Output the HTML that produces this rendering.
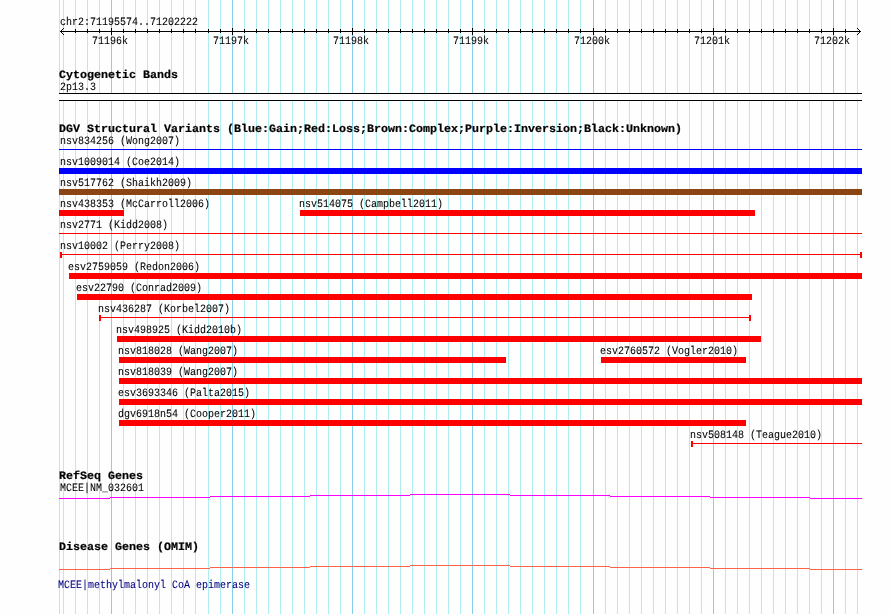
<!DOCTYPE html>
<html><head><meta charset="utf-8"><title>DGV Structural Variants - chr2:71195574..71202222</title>
<style>
html,body{margin:0;padding:0;background:#fdfefd;}
#wrap{position:relative;width:890px;height:614px;overflow:hidden;background:#fdfefd;}
svg{display:block;}
text{font-family:"Liberation Mono",monospace;white-space:pre;}
text.r{font-size:11.25px;stroke:#000;stroke-width:0.08px;}
text.b{font-size:11.25px;font-weight:bold;stroke:#000;stroke-width:0.2px;}
</style></head>
<body><div id="wrap">
<svg width="890" height="614" viewBox="0 0 890 614">
<g shape-rendering="crispEdges">
<rect x="59" y="0" width="1" height="93" fill="#afeeee"/>
<rect x="59" y="101" width="1" height="513" fill="#afeeee"/>
<rect x="63" y="0" width="1" height="93" fill="#afeeee"/>
<rect x="63" y="101" width="1" height="513" fill="#afeeee"/>
<rect x="75" y="0" width="1" height="93" fill="#afeeee"/>
<rect x="75" y="101" width="1" height="513" fill="#afeeee"/>
<rect x="87" y="0" width="1" height="93" fill="#afeeee"/>
<rect x="87" y="101" width="1" height="513" fill="#afeeee"/>
<rect x="99" y="0" width="1" height="93" fill="#afeeee"/>
<rect x="99" y="101" width="1" height="513" fill="#afeeee"/>
<rect x="111" y="0" width="1" height="93" fill="#87ceeb"/>
<rect x="111" y="101" width="1" height="513" fill="#87ceeb"/>
<rect x="123" y="0" width="1" height="93" fill="#afeeee"/>
<rect x="123" y="101" width="1" height="513" fill="#afeeee"/>
<rect x="135" y="0" width="1" height="93" fill="#afeeee"/>
<rect x="135" y="101" width="1" height="513" fill="#afeeee"/>
<rect x="147" y="0" width="1" height="93" fill="#afeeee"/>
<rect x="147" y="101" width="1" height="513" fill="#afeeee"/>
<rect x="159" y="0" width="1" height="93" fill="#afeeee"/>
<rect x="159" y="101" width="1" height="513" fill="#afeeee"/>
<rect x="171" y="0" width="1" height="93" fill="#afeeee"/>
<rect x="171" y="101" width="1" height="513" fill="#afeeee"/>
<rect x="183" y="0" width="1" height="93" fill="#afeeee"/>
<rect x="183" y="101" width="1" height="513" fill="#afeeee"/>
<rect x="195" y="0" width="1" height="93" fill="#afeeee"/>
<rect x="195" y="101" width="1" height="513" fill="#afeeee"/>
<rect x="208" y="0" width="1" height="93" fill="#afeeee"/>
<rect x="208" y="101" width="1" height="513" fill="#afeeee"/>
<rect x="220" y="0" width="1" height="93" fill="#afeeee"/>
<rect x="220" y="101" width="1" height="513" fill="#afeeee"/>
<rect x="232" y="0" width="1" height="93" fill="#87ceeb"/>
<rect x="232" y="101" width="1" height="513" fill="#87ceeb"/>
<rect x="244" y="0" width="1" height="93" fill="#afeeee"/>
<rect x="244" y="101" width="1" height="513" fill="#afeeee"/>
<rect x="256" y="0" width="1" height="93" fill="#afeeee"/>
<rect x="256" y="101" width="1" height="513" fill="#afeeee"/>
<rect x="268" y="0" width="1" height="93" fill="#afeeee"/>
<rect x="268" y="101" width="1" height="513" fill="#afeeee"/>
<rect x="280" y="0" width="1" height="93" fill="#afeeee"/>
<rect x="280" y="101" width="1" height="513" fill="#afeeee"/>
<rect x="292" y="0" width="1" height="93" fill="#afeeee"/>
<rect x="292" y="101" width="1" height="513" fill="#afeeee"/>
<rect x="304" y="0" width="1" height="93" fill="#afeeee"/>
<rect x="304" y="101" width="1" height="513" fill="#afeeee"/>
<rect x="316" y="0" width="1" height="93" fill="#afeeee"/>
<rect x="316" y="101" width="1" height="513" fill="#afeeee"/>
<rect x="328" y="0" width="1" height="93" fill="#afeeee"/>
<rect x="328" y="101" width="1" height="513" fill="#afeeee"/>
<rect x="340" y="0" width="1" height="93" fill="#afeeee"/>
<rect x="340" y="101" width="1" height="513" fill="#afeeee"/>
<rect x="352" y="0" width="1" height="93" fill="#87ceeb"/>
<rect x="352" y="101" width="1" height="513" fill="#87ceeb"/>
<rect x="364" y="0" width="1" height="93" fill="#afeeee"/>
<rect x="364" y="101" width="1" height="513" fill="#afeeee"/>
<rect x="376" y="0" width="1" height="93" fill="#afeeee"/>
<rect x="376" y="101" width="1" height="513" fill="#afeeee"/>
<rect x="388" y="0" width="1" height="93" fill="#afeeee"/>
<rect x="388" y="101" width="1" height="513" fill="#afeeee"/>
<rect x="400" y="0" width="1" height="93" fill="#afeeee"/>
<rect x="400" y="101" width="1" height="513" fill="#afeeee"/>
<rect x="412" y="0" width="1" height="93" fill="#afeeee"/>
<rect x="412" y="101" width="1" height="513" fill="#afeeee"/>
<rect x="424" y="0" width="1" height="93" fill="#afeeee"/>
<rect x="424" y="101" width="1" height="513" fill="#afeeee"/>
<rect x="436" y="0" width="1" height="93" fill="#afeeee"/>
<rect x="436" y="101" width="1" height="513" fill="#afeeee"/>
<rect x="448" y="0" width="1" height="93" fill="#afeeee"/>
<rect x="448" y="101" width="1" height="513" fill="#afeeee"/>
<rect x="460" y="0" width="1" height="93" fill="#afeeee"/>
<rect x="460" y="101" width="1" height="513" fill="#afeeee"/>
<rect x="472" y="0" width="1" height="93" fill="#87ceeb"/>
<rect x="472" y="101" width="1" height="513" fill="#87ceeb"/>
<rect x="484" y="0" width="1" height="93" fill="#afeeee"/>
<rect x="484" y="101" width="1" height="513" fill="#afeeee"/>
<rect x="496" y="0" width="1" height="93" fill="#afeeee"/>
<rect x="496" y="101" width="1" height="513" fill="#afeeee"/>
<rect x="508" y="0" width="1" height="93" fill="#afeeee"/>
<rect x="508" y="101" width="1" height="513" fill="#afeeee"/>
<rect x="520" y="0" width="1" height="93" fill="#afeeee"/>
<rect x="520" y="101" width="1" height="513" fill="#afeeee"/>
<rect x="532" y="0" width="1" height="93" fill="#afeeee"/>
<rect x="532" y="101" width="1" height="513" fill="#afeeee"/>
<rect x="544" y="0" width="1" height="93" fill="#afeeee"/>
<rect x="544" y="101" width="1" height="513" fill="#afeeee"/>
<rect x="556" y="0" width="1" height="93" fill="#afeeee"/>
<rect x="556" y="101" width="1" height="513" fill="#afeeee"/>
<rect x="568" y="0" width="1" height="93" fill="#afeeee"/>
<rect x="568" y="101" width="1" height="513" fill="#afeeee"/>
<rect x="580" y="0" width="1" height="93" fill="#afeeee"/>
<rect x="580" y="101" width="1" height="513" fill="#afeeee"/>
<rect x="593" y="0" width="1" height="93" fill="#87ceeb"/>
<rect x="593" y="101" width="1" height="513" fill="#87ceeb"/>
<rect x="605" y="0" width="1" height="93" fill="#afeeee"/>
<rect x="605" y="101" width="1" height="513" fill="#afeeee"/>
<rect x="617" y="0" width="1" height="93" fill="#afeeee"/>
<rect x="617" y="101" width="1" height="513" fill="#afeeee"/>
<rect x="629" y="0" width="1" height="93" fill="#afeeee"/>
<rect x="629" y="101" width="1" height="513" fill="#afeeee"/>
<rect x="641" y="0" width="1" height="93" fill="#afeeee"/>
<rect x="641" y="101" width="1" height="513" fill="#afeeee"/>
<rect x="653" y="0" width="1" height="93" fill="#afeeee"/>
<rect x="653" y="101" width="1" height="513" fill="#afeeee"/>
<rect x="665" y="0" width="1" height="93" fill="#afeeee"/>
<rect x="665" y="101" width="1" height="513" fill="#afeeee"/>
<rect x="677" y="0" width="1" height="93" fill="#afeeee"/>
<rect x="677" y="101" width="1" height="513" fill="#afeeee"/>
<rect x="689" y="0" width="1" height="93" fill="#afeeee"/>
<rect x="689" y="101" width="1" height="513" fill="#afeeee"/>
<rect x="701" y="0" width="1" height="93" fill="#afeeee"/>
<rect x="701" y="101" width="1" height="513" fill="#afeeee"/>
<rect x="713" y="0" width="1" height="93" fill="#87ceeb"/>
<rect x="713" y="101" width="1" height="513" fill="#87ceeb"/>
<rect x="725" y="0" width="1" height="93" fill="#afeeee"/>
<rect x="725" y="101" width="1" height="513" fill="#afeeee"/>
<rect x="737" y="0" width="1" height="93" fill="#afeeee"/>
<rect x="737" y="101" width="1" height="513" fill="#afeeee"/>
<rect x="749" y="0" width="1" height="93" fill="#afeeee"/>
<rect x="749" y="101" width="1" height="513" fill="#afeeee"/>
<rect x="761" y="0" width="1" height="93" fill="#afeeee"/>
<rect x="761" y="101" width="1" height="513" fill="#afeeee"/>
<rect x="773" y="0" width="1" height="93" fill="#afeeee"/>
<rect x="773" y="101" width="1" height="513" fill="#afeeee"/>
<rect x="785" y="0" width="1" height="93" fill="#afeeee"/>
<rect x="785" y="101" width="1" height="513" fill="#afeeee"/>
<rect x="797" y="0" width="1" height="93" fill="#afeeee"/>
<rect x="797" y="101" width="1" height="513" fill="#afeeee"/>
<rect x="809" y="0" width="1" height="93" fill="#afeeee"/>
<rect x="809" y="101" width="1" height="513" fill="#afeeee"/>
<rect x="821" y="0" width="1" height="93" fill="#afeeee"/>
<rect x="821" y="101" width="1" height="513" fill="#afeeee"/>
<rect x="833" y="0" width="1" height="93" fill="#87ceeb"/>
<rect x="833" y="101" width="1" height="513" fill="#87ceeb"/>
<rect x="845" y="0" width="1" height="93" fill="#afeeee"/>
<rect x="845" y="101" width="1" height="513" fill="#afeeee"/>
<rect x="857" y="0" width="1" height="93" fill="#afeeee"/>
<rect x="857" y="101" width="1" height="513" fill="#afeeee"/>
<rect x="59" y="93" width="803" height="1" fill="#000"/>
<rect x="59" y="100" width="803" height="1" fill="#000"/>
<rect x="60" y="31" width="801" height="1" fill="#000"/>
<rect x="61" y="30" width="1" height="1" fill="#000"/>
<rect x="62" y="29" width="1" height="1" fill="#000"/>
<rect x="63" y="28" width="1" height="1" fill="#000"/>
<rect x="61" y="32" width="1" height="1" fill="#000"/>
<rect x="62" y="33" width="1" height="1" fill="#000"/>
<rect x="63" y="34" width="1" height="1" fill="#000"/>
<rect x="859" y="30" width="1" height="1" fill="#000"/>
<rect x="858" y="29" width="1" height="1" fill="#000"/>
<rect x="857" y="28" width="1" height="1" fill="#000"/>
<rect x="859" y="32" width="1" height="1" fill="#000"/>
<rect x="858" y="33" width="1" height="1" fill="#000"/>
<rect x="857" y="34" width="1" height="1" fill="#000"/>
<rect x="75" y="29" width="1" height="4" fill="#000"/>
<rect x="87" y="29" width="1" height="4" fill="#000"/>
<rect x="99" y="29" width="1" height="4" fill="#000"/>
<rect x="111" y="28" width="1" height="7" fill="#000"/>
<rect x="123" y="29" width="1" height="4" fill="#000"/>
<rect x="135" y="29" width="1" height="4" fill="#000"/>
<rect x="147" y="29" width="1" height="4" fill="#000"/>
<rect x="159" y="29" width="1" height="4" fill="#000"/>
<rect x="171" y="29" width="1" height="4" fill="#000"/>
<rect x="183" y="29" width="1" height="4" fill="#000"/>
<rect x="195" y="29" width="1" height="4" fill="#000"/>
<rect x="208" y="29" width="1" height="4" fill="#000"/>
<rect x="220" y="29" width="1" height="4" fill="#000"/>
<rect x="232" y="28" width="1" height="7" fill="#000"/>
<rect x="244" y="29" width="1" height="4" fill="#000"/>
<rect x="256" y="29" width="1" height="4" fill="#000"/>
<rect x="268" y="29" width="1" height="4" fill="#000"/>
<rect x="280" y="29" width="1" height="4" fill="#000"/>
<rect x="292" y="29" width="1" height="4" fill="#000"/>
<rect x="304" y="29" width="1" height="4" fill="#000"/>
<rect x="316" y="29" width="1" height="4" fill="#000"/>
<rect x="328" y="29" width="1" height="4" fill="#000"/>
<rect x="340" y="29" width="1" height="4" fill="#000"/>
<rect x="352" y="28" width="1" height="7" fill="#000"/>
<rect x="364" y="29" width="1" height="4" fill="#000"/>
<rect x="376" y="29" width="1" height="4" fill="#000"/>
<rect x="388" y="29" width="1" height="4" fill="#000"/>
<rect x="400" y="29" width="1" height="4" fill="#000"/>
<rect x="412" y="29" width="1" height="4" fill="#000"/>
<rect x="424" y="29" width="1" height="4" fill="#000"/>
<rect x="436" y="29" width="1" height="4" fill="#000"/>
<rect x="448" y="29" width="1" height="4" fill="#000"/>
<rect x="460" y="29" width="1" height="4" fill="#000"/>
<rect x="472" y="28" width="1" height="7" fill="#000"/>
<rect x="484" y="29" width="1" height="4" fill="#000"/>
<rect x="496" y="29" width="1" height="4" fill="#000"/>
<rect x="508" y="29" width="1" height="4" fill="#000"/>
<rect x="520" y="29" width="1" height="4" fill="#000"/>
<rect x="532" y="29" width="1" height="4" fill="#000"/>
<rect x="544" y="29" width="1" height="4" fill="#000"/>
<rect x="556" y="29" width="1" height="4" fill="#000"/>
<rect x="568" y="29" width="1" height="4" fill="#000"/>
<rect x="580" y="29" width="1" height="4" fill="#000"/>
<rect x="593" y="28" width="1" height="7" fill="#000"/>
<rect x="605" y="29" width="1" height="4" fill="#000"/>
<rect x="617" y="29" width="1" height="4" fill="#000"/>
<rect x="629" y="29" width="1" height="4" fill="#000"/>
<rect x="641" y="29" width="1" height="4" fill="#000"/>
<rect x="653" y="29" width="1" height="4" fill="#000"/>
<rect x="665" y="29" width="1" height="4" fill="#000"/>
<rect x="677" y="29" width="1" height="4" fill="#000"/>
<rect x="689" y="29" width="1" height="4" fill="#000"/>
<rect x="701" y="29" width="1" height="4" fill="#000"/>
<rect x="713" y="28" width="1" height="7" fill="#000"/>
<rect x="725" y="29" width="1" height="4" fill="#000"/>
<rect x="737" y="29" width="1" height="4" fill="#000"/>
<rect x="749" y="29" width="1" height="4" fill="#000"/>
<rect x="761" y="29" width="1" height="4" fill="#000"/>
<rect x="773" y="29" width="1" height="4" fill="#000"/>
<rect x="785" y="29" width="1" height="4" fill="#000"/>
<rect x="797" y="29" width="1" height="4" fill="#000"/>
<rect x="809" y="29" width="1" height="4" fill="#000"/>
<rect x="821" y="29" width="1" height="4" fill="#000"/>
<rect x="833" y="28" width="1" height="7" fill="#000"/>
<rect x="845" y="29" width="1" height="4" fill="#000"/>
<rect x="59" y="149" width="803" height="1" fill="#0000ff"/>
<rect x="59" y="168" width="803" height="6" fill="#0000ff"/>
<rect x="59" y="189" width="803" height="6" fill="#8b4513"/>
<rect x="59" y="210" width="65" height="6" fill="#ff0000"/>
<rect x="300" y="210" width="455" height="6" fill="#ff0000"/>
<rect x="59" y="233" width="803" height="1" fill="#ff0000"/>
<rect x="60" y="254" width="802" height="1" fill="#ff0000"/>
<rect x="60" y="252" width="2" height="6" fill="#ff0000"/>
<rect x="860" y="252" width="2" height="6" fill="#ff0000"/>
<rect x="69" y="273" width="793" height="6" fill="#ff0000"/>
<rect x="77" y="294" width="675" height="6" fill="#ff0000"/>
<rect x="99" y="317" width="652" height="1" fill="#ff0000"/>
<rect x="99" y="315" width="2" height="6" fill="#ff0000"/>
<rect x="749" y="315" width="2" height="6" fill="#ff0000"/>
<rect x="117" y="336" width="644" height="6" fill="#ff0000"/>
<rect x="119" y="357" width="387" height="6" fill="#ff0000"/>
<rect x="601" y="357" width="145" height="6" fill="#ff0000"/>
<rect x="119" y="378" width="743" height="6" fill="#ff0000"/>
<rect x="119" y="399" width="743" height="6" fill="#ff0000"/>
<rect x="119" y="420" width="627" height="6" fill="#ff0000"/>
<rect x="691" y="443" width="171" height="1" fill="#ff0000"/>
<rect x="691" y="441" width="2" height="6" fill="#ff0000"/>
<rect x="59" y="498" width="51" height="1" fill="#ff00ff"/>
<rect x="110" y="497" width="100" height="1" fill="#ff00ff"/>
<rect x="210" y="496" width="100" height="1" fill="#ff00ff"/>
<rect x="310" y="495" width="100" height="1" fill="#ff00ff"/>
<rect x="410" y="494" width="100" height="1" fill="#ff00ff"/>
<rect x="510" y="495" width="100" height="1" fill="#ff00ff"/>
<rect x="610" y="496" width="100" height="1" fill="#ff00ff"/>
<rect x="710" y="497" width="100" height="1" fill="#ff00ff"/>
<rect x="810" y="498" width="52" height="1" fill="#ff00ff"/>
<rect x="59" y="569" width="51" height="1" fill="#ff6347"/>
<rect x="110" y="568" width="100" height="1" fill="#ff6347"/>
<rect x="210" y="567" width="100" height="1" fill="#ff6347"/>
<rect x="310" y="566" width="100" height="1" fill="#ff6347"/>
<rect x="410" y="565" width="100" height="1" fill="#ff6347"/>
<rect x="510" y="566" width="100" height="1" fill="#ff6347"/>
<rect x="610" y="567" width="100" height="1" fill="#ff6347"/>
<rect x="710" y="568" width="100" height="1" fill="#ff6347"/>
<rect x="810" y="569" width="52" height="1" fill="#ff6347"/>
</g>
<g style="will-change:transform;text-rendering:geometricPrecision">
<text lengthAdjust="spacingAndGlyphs" class="r" x="60.0" y="25.0" textLength="138">chr2:71195574..71202222</text>
<text lengthAdjust="spacingAndGlyphs" class="r" x="92.0" y="44.0" textLength="36">71196k</text>
<text lengthAdjust="spacingAndGlyphs" class="r" x="213.0" y="44.0" textLength="36">71197k</text>
<text lengthAdjust="spacingAndGlyphs" class="r" x="333.0" y="44.0" textLength="36">71198k</text>
<text lengthAdjust="spacingAndGlyphs" class="r" x="453.0" y="44.0" textLength="36">71199k</text>
<text lengthAdjust="spacingAndGlyphs" class="r" x="574.0" y="44.0" textLength="36">71200k</text>
<text lengthAdjust="spacingAndGlyphs" class="r" x="694.0" y="44.0" textLength="36">71201k</text>
<text lengthAdjust="spacingAndGlyphs" class="r" x="814.0" y="44.0" textLength="36">71202k</text>
<text lengthAdjust="spacingAndGlyphs" class="b" x="59.0" y="78.0" textLength="119">Cytogenetic Bands</text>
<text lengthAdjust="spacingAndGlyphs" class="r" x="60.0" y="90.0" textLength="36">2p13.3</text>
<text lengthAdjust="spacingAndGlyphs" class="b" x="59.0" y="132.0" textLength="623">DGV Structural Variants (Blue:Gain;Red:Loss;Brown:Complex;Purple:Inversion;Black:Unknown)</text>
<text lengthAdjust="spacingAndGlyphs" class="r" x="60.0" y="144.0" textLength="120">nsv834256 (Wong2007)</text>
<text lengthAdjust="spacingAndGlyphs" class="r" x="60.0" y="165.0" textLength="120">nsv1009014 (Coe2014)</text>
<text lengthAdjust="spacingAndGlyphs" class="r" x="60.0" y="186.0" textLength="132">nsv517762 (Shaikh2009)</text>
<text lengthAdjust="spacingAndGlyphs" class="r" x="60.0" y="207.0" textLength="150">nsv438353 (McCarroll2006)</text>
<text lengthAdjust="spacingAndGlyphs" class="r" x="299.0" y="207.0" textLength="144">nsv514075 (Campbell2011)</text>
<text lengthAdjust="spacingAndGlyphs" class="r" x="60.0" y="228.0" textLength="108">nsv2771 (Kidd2008)</text>
<text lengthAdjust="spacingAndGlyphs" class="r" x="60.0" y="249.0" textLength="120">nsv10002 (Perry2008)</text>
<text lengthAdjust="spacingAndGlyphs" class="r" x="68.0" y="270.0" textLength="132">esv2759059 (Redon2006)</text>
<text lengthAdjust="spacingAndGlyphs" class="r" x="76.0" y="291.0" textLength="126">esv22790 (Conrad2009)</text>
<text lengthAdjust="spacingAndGlyphs" class="r" x="98.0" y="312.0" textLength="132">nsv436287 (Korbel2007)</text>
<text lengthAdjust="spacingAndGlyphs" class="r" x="116.0" y="333.0" textLength="126">nsv498925 (Kidd2010b)</text>
<text lengthAdjust="spacingAndGlyphs" class="r" x="118.0" y="354.0" textLength="120">nsv818028 (Wang2007)</text>
<text lengthAdjust="spacingAndGlyphs" class="r" x="600.0" y="354.0" textLength="138">esv2760572 (Vogler2010)</text>
<text lengthAdjust="spacingAndGlyphs" class="r" x="118.0" y="375.0" textLength="120">nsv818039 (Wang2007)</text>
<text lengthAdjust="spacingAndGlyphs" class="r" x="118.0" y="396.0" textLength="132">esv3693346 (Palta2015)</text>
<text lengthAdjust="spacingAndGlyphs" class="r" x="118.0" y="417.0" textLength="138">dgv6918n54 (Cooper2011)</text>
<text lengthAdjust="spacingAndGlyphs" class="r" x="690.0" y="438.0" textLength="132">nsv508148 (Teague2010)</text>
<text lengthAdjust="spacingAndGlyphs" class="b" x="59.0" y="479.0" textLength="84">RefSeq Genes</text>
<text lengthAdjust="spacingAndGlyphs" class="r" x="60.0" y="491.0" textLength="84">MCEE|NM_032601</text>
<text lengthAdjust="spacingAndGlyphs" class="b" x="59.0" y="550.0" textLength="140">Disease Genes (OMIM)</text>
<text lengthAdjust="spacingAndGlyphs" class="r" x="58.0" y="588.0" textLength="192" style="fill:#000080;stroke:#000080">MCEE|methylmalonyl CoA epimerase</text>
</g>
</svg>
</div></body></html>
